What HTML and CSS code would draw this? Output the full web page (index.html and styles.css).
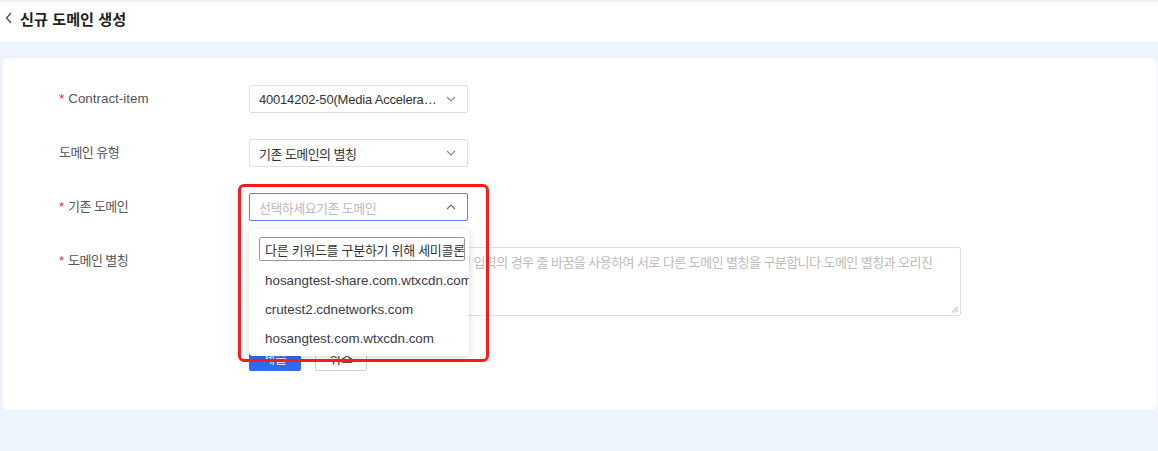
FILE: index.html
```html
<!DOCTYPE html>
<html lang="ko">
<head>
<meta charset="utf-8">
<title>신규 도메인 생성</title>
<link rel="stylesheet" href="styles.css">
</head>
<body>
<header class="topbar">
  <svg class="back" width="8" height="12" viewBox="0 0 8 12"><path d="M6 1 L1.5 6 L6 11" fill="none" stroke="#444" stroke-width="1.2"/></svg>
  <h1 class="title">신규 도메인 생성</h1>
</header>
<main class="content">
  <section class="card">
    <form class="form">
      <div class="row">
        <label class="label latin"><span class="req">*</span>Contract-item</label>
        <div class="control">
          <div class="select">
            <span class="value ellipsis tight">40014202-50(Media Acceleration)</span>
            <svg class="arrow" width="10" height="6" viewBox="0 0 10 6"><path d="M1 1 L5 5 L9 1" fill="none" stroke="#888" stroke-width="1.1"/></svg>
          </div>
        </div>
      </div>
      <div class="row">
        <label class="label ko">도메인 유형</label>
        <div class="control">
          <div class="select">
            <span class="value ko">기존 도메인의 별칭</span>
            <svg class="arrow" width="10" height="6" viewBox="0 0 10 6"><path d="M1 1 L5 5 L9 1" fill="none" stroke="#888" stroke-width="1.1"/></svg>
          </div>
        </div>
      </div>
      <div class="row">
        <label class="label ko"><span class="req">*</span>기존 도메인</label>
        <div class="control anchor">
          <div class="select focused">
            <span class="value placeholder ko">선택하세요기존 도메인</span>
            <svg class="arrow" width="10" height="6" viewBox="0 0 10 6"><path d="M1 5 L5 1 L9 5" fill="none" stroke="#666" stroke-width="1.1"/></svg>
          </div>
          <div class="dropdown">
            <div class="search"><span>다른 키워드를 구분하기 위해 세미콜론을 사용하세요</span></div>
            <ul class="options latin">
              <li>hosangtest-share.com.wtxcdn.com</li>
              <li>crutest2.cdnetworks.com</li>
              <li>hosangtest.com.wtxcdn.com</li>
            </ul>
          </div>
          <div class="annotation"></div>
        </div>
      </div>
      <div class="row">
        <label class="label ko"><span class="req">*</span>도메인 별칭</label>
        <div class="control">
          <div class="textarea ko"><span class="placeholder">도메인 별칭을 입력해주세요. 여러 개 별칭 입력의 경우 줄 바꿈을 사용하여 서로 다른 도메인 별칭을 구분합니다.도메인 별칭과 오리진</span>
            <svg class="grip" width="7" height="7" viewBox="0 0 7 7"><path d="M6.5 1 L1 6.5 M6.5 4 L4 6.5" stroke="#999" stroke-width="0.9"/></svg>
          </div>
        </div>
      </div>
      <div class="actions">
        <button type="button" class="btn primary">제출</button>
        <button type="button" class="btn">취소</button>
      </div>
    </form>
  </section>
</main>
</body>
</html>
```

FILE: styles.css
```css
* { box-sizing: border-box; }
html, body { margin: 0; padding: 0; }
body {
  width: 1158px;
  height: 451px;
  overflow: hidden;
  background: #eef4fc;
  font-family: "Liberation Sans", "Noto Sans CJK KR", Arial, sans-serif;
  font-size: 13px;
  color: #333;
}
.ko { letter-spacing: -0.55px; }
.latin { font-size: 13.4px; }
.tight { letter-spacing: -0.2px; }
.topbar {
  height: 42px;
  background: #fff;
  border-top: 2px solid #f3f3f3;
  display: flex;
  align-items: center;
  padding: 0 0 9px 5px;
  gap: 7px;
}
.back { display: block; }
.title {
  margin: 0;
  font-size: 15.2px;
  font-weight: bold;
  color: #1f1f1f;
}
.content {
  padding: 16px 1px 0 3px;
}
.card {
  background: #fff;
  border-radius: 6px;
  height: 352px;
  padding: 27px 0 0 56px;
}
.form { display: flex; flex-direction: column; gap: 26px; }
.row { display: flex; align-items: flex-start; }
.label {
  width: 190px;
  line-height: 28px;
  color: #555;
}
.label.ko { font-size: 13px; }
.req { color: #f5222d; margin-right: 4px; letter-spacing: 0; }
.control { position: relative; }
.select {
  width: 219px;
  height: 28px;
  border: 1px solid #dcdfe6;
  border-radius: 2px;
  display: flex;
  align-items: center;
  padding: 0 11px 0 9px;
  gap: 8px;
  color: #333;
}
.select .value { flex: 1; min-width: 0; white-space: nowrap; }
.ellipsis { overflow: hidden; text-overflow: ellipsis; }
.select.focused { border-color: #5b7ff5; }
.placeholder { color: #bbb; }
.arrow { flex: none; }
.dropdown {
  position: absolute;
  left: 0;
  top: 36px;
  width: 220px;
  height: 127px;
  background: #fff;
  border-radius: 4px;
  box-shadow: 0 2px 10px rgba(0,0,0,0.15);
  padding: 8px 4px 0 10px;
  z-index: 5;
  overflow: hidden;
}
.search {
  width: 206px;
  height: 24px;
  border: 1px solid #999;
  border-radius: 2px;
  padding: 0 5px;
  display: flex;
  align-items: center;
  overflow: hidden;
  white-space: nowrap;
  color: #333;
  letter-spacing: -0.3px;
}
.options { list-style: none; margin: 5px 0 0 0; padding: 0 0 0 6px; }
.options li {
  line-height: 29px;
  white-space: nowrap;
  color: #3a3a4a;
}
.annotation {
  position: absolute;
  left: -11px;
  top: -9px;
  width: 251px;
  height: 178px;
  border: 3px solid #ff1a1a;
  border-radius: 6px;
  z-index: 6;
  pointer-events: none;
}
.textarea {
  position: relative;
  width: 712px;
  height: 69px;
  border: 1px solid #dcdfe6;
  border-radius: 2px;
  padding: 6px 8px;
  line-height: 18px;
}
.grip { position: absolute; right: 2px; bottom: 2px; }
.actions {
  display: flex;
  gap: 14px;
  padding-left: 190px;
  margin-top: 1px;
}
.btn {
  width: 52px;
  height: 28px;
  border: 1px solid #d0d0d0;
  border-radius: 2px;
  background: #fff;
  color: #333;
  font: inherit;
  font-size: 13px;
  padding: 0;
}
.btn.primary {
  background: #2f6bf6;
  border-color: #2f6bf6;
  color: #fff;
}
```
